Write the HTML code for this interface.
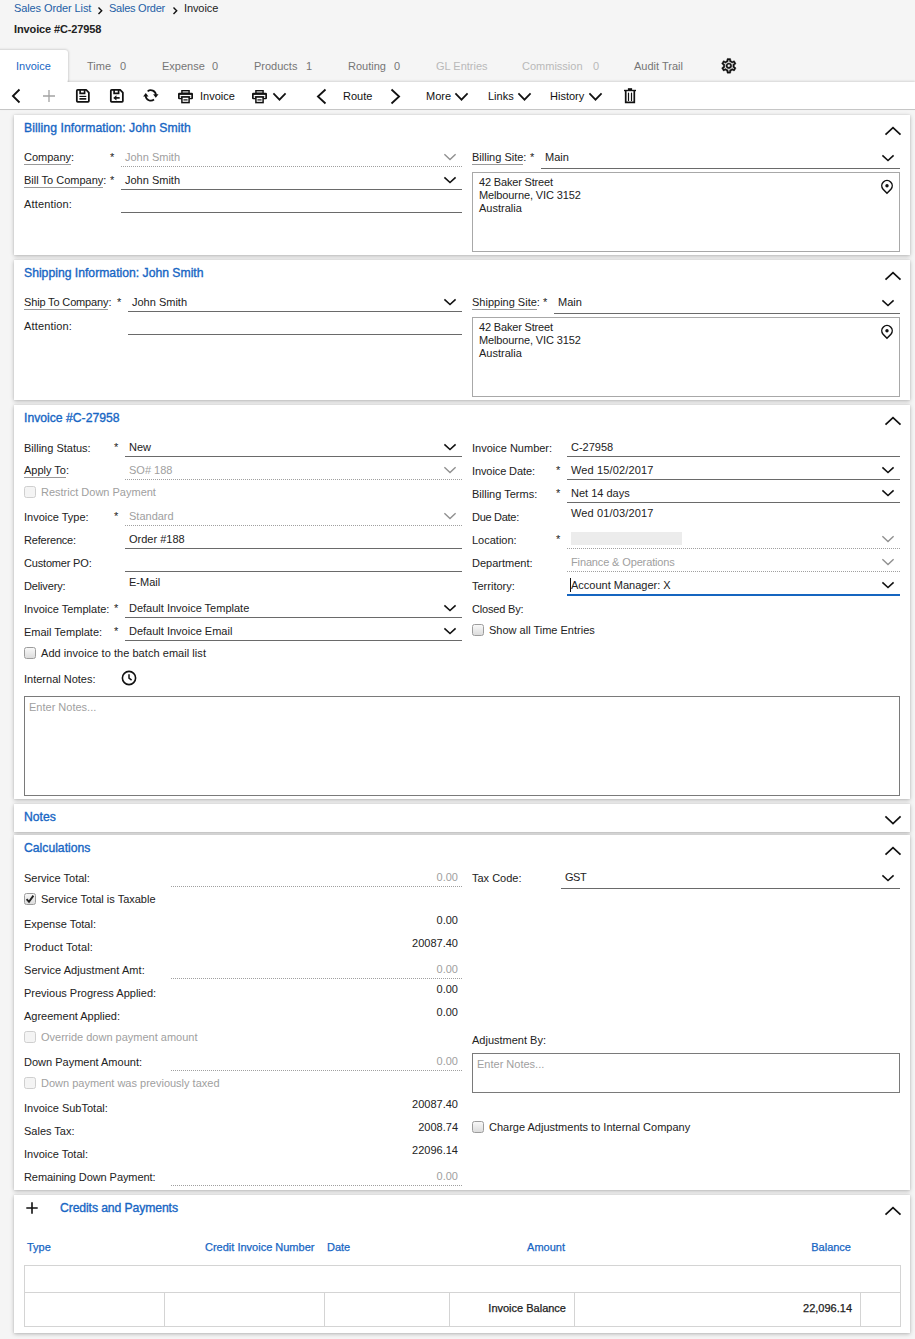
<!DOCTYPE html>
<html lang="en">
<head>
<meta charset="utf-8">
<title>Invoice #C-27958</title>
<style>
*{box-sizing:border-box;margin:0;padding:0}
html,body{width:915px;height:1339px;overflow:hidden;background:#f5f5f5;font-family:"Liberation Sans",Arial,sans-serif;font-size:11px;color:#222}
.abs,.t,.card,.fld,.box,.cb,svg.i{position:absolute}
.t{white-space:nowrap;line-height:14px;height:14px}
.blue{color:#245fa6}
.gray{color:#a0a0a0}
.tab{color:#757575;font-size:11px}
.b{font-weight:bold}
.ul{border-bottom:1px solid #999;padding-bottom:1px}
.r{text-align:right}
.card{left:14px;width:896px;background:#fff;box-shadow:0 1px 4px rgba(0,0,0,.27),0 0 1px rgba(0,0,0,.1)}
.h{font-size:12.2px;color:#1766c4;-webkit-text-stroke:.35px #1766c4}
.hd{-webkit-text-stroke:.25px #1766c4;color:#1766c4}
.fld{height:1px;border-bottom:1px solid #6a6a6a}
.fld.d{border-bottom:1px dotted #a0a0a0}
.fld.act{border-bottom:2px solid #1565c0;height:2px}
.box{border:1px solid #7a7a7a;background:#fff}
.box.addr{border-color:#a8a8a8}
.cb{width:12px;height:12px;border:1px solid #9c9c9c;border-radius:2.5px;background:linear-gradient(#f8f8f8,#dcdcdc)}
.cb.dis{border-color:#cfcfcf;background:#f4f4f4}
svg.i{overflow:visible}
.tb{font-size:11px;color:#111}
</style>
</head>
<body>

<!-- breadcrumb -->
<div class="t blue" style="top:1px;left:14px;letter-spacing:-.1px">Sales Order List</div>
<div class="t blue" style="top:1px;left:109px;letter-spacing:-.25px">Sales Order</div>
<div class="t " style="top:1px;left:184px;letter-spacing:-.1px">Invoice</div>
<svg class="i" style="left:98.2px;top:7.3px" width="4.6" height="7.4" viewBox="0 0 4.6 7.4"><polyline points="0.5,0.5 3.6999999999999997,3.7 0.5,6.9" fill="none" stroke="#111" stroke-width="1.4"/></svg>
<svg class="i" style="left:173.39999999999998px;top:7.3px" width="4.6" height="7.4" viewBox="0 0 4.6 7.4"><polyline points="0.5,0.5 3.6999999999999997,3.7 0.5,6.9" fill="none" stroke="#111" stroke-width="1.4"/></svg>
<div class="t b" style="top:22px;left:14px;letter-spacing:-.12px">Invoice #C-27958</div>
<!-- tabs -->
<div class="abs" style="left:-4px;top:50px;width:72px;height:33px;background:#fff;border-radius:0 3px 0 0;box-shadow:0 0 3px rgba(0,0,0,.28)"></div>
<div class="abs" style="left:0;top:82px;width:915px;height:28px;background:#fff;border-bottom:1px solid #c6c6c6;box-shadow:0 -1px 2px rgba(0,0,0,.13)"></div>
<div class="abs" style="left:0;top:76px;width:67px;height:10px;background:#fff"></div>
<div class="t blue" style="top:59px;left:16px;color:#1766c4">Invoice</div>
<div class="t tab" style="top:59px;left:87px;">Time</div>
<div class="t tab" style="top:59px;left:120px;">0</div>
<div class="t tab" style="top:59px;left:162px;">Expense</div>
<div class="t tab" style="top:59px;left:212px;">0</div>
<div class="t tab" style="top:59px;left:254px;">Products</div>
<div class="t tab" style="top:59px;left:306px;">1</div>
<div class="t tab" style="top:59px;left:348px;">Routing</div>
<div class="t tab" style="top:59px;left:394px;">0</div>
<div class="t tab" style="top:59px;left:436px;color:#b9b9b9">GL Entries</div>
<div class="t tab" style="top:59px;left:522px;color:#b9b9b9">Commission</div>
<div class="t tab" style="top:59px;left:593px;color:#b9b9b9">0</div>
<div class="t tab" style="top:59px;left:634px;">Audit Trail</div>
<svg class="i" style="left:720.15px;top:57.4px" width="17.7" height="17.7" viewBox="0 0 24 24"><path fill="#111" stroke="#111" stroke-width=".5" d="M19.43 12.98c.04-.32.07-.64.07-.98s-.03-.66-.07-.98l2.11-1.65c.19-.15.24-.42.12-.64l-2-3.46c-.12-.22-.39-.3-.61-.22l-2.49 1c-.52-.4-1.08-.73-1.69-.98l-.38-2.65C14.46 2.18 14.25 2 14 2h-4c-.25 0-.46.18-.49.42l-.38 2.65c-.61.25-1.17.59-1.69.98l-2.49-1c-.23-.09-.49 0-.61.22l-2 3.46c-.13.22-.07.49.12.64l2.11 1.65c-.04.32-.07.65-.07.98s.03.66.07.98l-2.11 1.65c-.19.15-.24.42-.12.64l2 3.46c.12.22.39.3.61.22l2.49-1c.52.4 1.08.73 1.69.98l.38 2.65c.03.24.24.42.49.42h4c.25 0 .46-.18.49-.42l.38-2.65c.61-.25 1.17-.59 1.69-.98l2.49 1c.23.09.49 0 .61-.22l2-3.46c.12-.22.07-.49-.12-.64l-2.11-1.65zm-1.98-1.71c.04.31.05.52.05.73s-.02.43-.05.73l-.14 1.13.89.7 1.08.84-.7 1.21-1.27-.51-1.04-.42-.9.68c-.43.32-.84.56-1.25.73l-1.06.43-.16 1.13-.2 1.35h-1.4l-.19-1.35-.16-1.13-1.06-.43c-.43-.18-.83-.41-1.23-.71l-.91-.7-1.06.43-1.27.51-.7-1.21 1.08-.84.89-.7-.14-1.13c-.03-.31-.05-.54-.05-.74s.02-.43.05-.73l.14-1.13-.89-.7-1.08-.84.7-1.21 1.27.51 1.04.42.9-.68c.43-.32.84-.56 1.25-.73l1.06-.43.16-1.13.2-1.35h1.39l.19 1.35.16 1.13 1.06.43c.43.18.83.41 1.23.71l.91.7 1.06-.43 1.27-.51.7 1.21-1.07.85-.89.7.14 1.13zM12 8c-2.21 0-4 1.79-4 4s1.790 4 4 4 4-1.790 4-4-1.790-4-4-4zm0 6c-1.100 0-2-.9-2-2s.9-2 2-2 2 .9 2 2-.9 2-2 2z"/></svg>
<!-- toolbar -->
<svg class="i" style="left:11.6px;top:89.0px" width="8" height="14" viewBox="0 0 8 14"><polyline points="7.5,0.5 0.9,7.0 7.5,13.5" fill="none" stroke="#111" stroke-width="1.8"/></svg>
<svg class="i" style="left:43px;top:90px" width="12" height="12" viewBox="0 0 12 12"><path d="M6 0V12M0 6H12" stroke="#a3a3a3" stroke-width="1.3" fill="none"/></svg>
<svg class="i" style="left:76.2px;top:88.9px" width="13.7" height="13.7" viewBox="0 0 14 14"><path d="M1.7 0.85H10.4L13.15 3.6V12.3Q13.15 13.15 12.3 13.15H1.7Q0.85 13.15 0.85 12.3V1.7Q0.85 0.85 1.7 0.85Z" fill="none" stroke="#111" stroke-width="1.8" stroke-linejoin="round"/><path d="M4.2 1V4.5H8.8V1" fill="none" stroke="#111" stroke-width="1.7"/><path d="M3.5 7.6H10.5" stroke="#111" stroke-width="1.2" fill="none"/><path d="M3.5 10.1H10.5" stroke="#111" stroke-width="1.7" fill="none"/></svg>
<svg class="i" style="left:110.2px;top:88.9px" width="13.7" height="13.7" viewBox="0 0 14 14"><path d="M1.7 0.85H10.4L13.15 3.6V12.3Q13.15 13.15 12.3 13.15H1.7Q0.85 13.15 0.85 12.3V1.7Q0.85 0.85 1.7 0.85Z" fill="none" stroke="#111" stroke-width="1.8" stroke-linejoin="round"/><path d="M4.2 1V4.5H8.8V1" fill="none" stroke="#111" stroke-width="1.7"/><path d="M5.5 9.1H9.9" stroke="#111" stroke-width="1.7" fill="none"/><path d="M3.3 9.1L6.6 6.5V11.7Z" fill="#111"/></svg>
<svg class="i" style="left:143.2px;top:89.4px" width="15.6" height="13" viewBox="0 0 15.6 13"><path d="M4.6 2.3A5.2 5.2 0 0 1 12.98 5.9" fill="none" stroke="#111" stroke-width="1.7"/><path d="M10.1 5.3H15.5L12.8 8.7Z" fill="#111"/><path d="M11 10.5A5.2 5.2 0 0 1 2.62 6.9" fill="none" stroke="#111" stroke-width="1.7"/><path d="M0.1 7.5H5.5L2.8 4.1Z" fill="#111"/></svg>
<svg class="i" style="left:177.5px;top:90px" width="15" height="13.4" viewBox="0 0 15 13.4"><rect x="3.9" y="0.7" width="7.2" height="2.6" fill="none" stroke="#111" stroke-width="1.4"/><rect x="0" y="2.7" width="15" height="6.6" rx="1.3" fill="#111"/><rect x="1.7" y="4.9" width="11.6" height="1.4" fill="#fff"/><rect x="1.7" y="6.3" width="1.5" height="1.6" fill="#fff"/><rect x="11.8" y="6.3" width="1.5" height="1.6" fill="#fff"/><rect x="3.9" y="7" width="7.2" height="5.6" fill="#fff" stroke="#111" stroke-width="1.5"/><path d="M5.4 9.9H9.6" stroke="#111" stroke-width="1.2"/></svg>
<svg class="i" style="left:251.9px;top:90px" width="15" height="13.4" viewBox="0 0 15 13.4"><rect x="3.9" y="0.7" width="7.2" height="2.6" fill="none" stroke="#111" stroke-width="1.4"/><rect x="0" y="2.7" width="15" height="6.6" rx="1.3" fill="#111"/><rect x="1.7" y="4.9" width="11.6" height="1.4" fill="#fff"/><rect x="1.7" y="6.3" width="1.5" height="1.6" fill="#fff"/><rect x="11.8" y="6.3" width="1.5" height="1.6" fill="#fff"/><rect x="3.9" y="7" width="7.2" height="5.6" fill="#fff" stroke="#111" stroke-width="1.5"/><path d="M5.4 9.9H9.6" stroke="#111" stroke-width="1.2"/></svg>
<svg class="i" style="left:624px;top:88.1px" width="12" height="15.2" viewBox="0 0 12 15.2"><rect x="3.9" y="0.2" width="4.2" height="1.9" fill="#111"/><rect x="0" y="1.8" width="12" height="1.4" fill="#111"/><path d="M1.7 3V14.3H10.3V3" fill="none" stroke="#111" stroke-width="1.7"/><path d="M4.5 5.2V12.4M7.5 5.2V12.4" stroke="#111" stroke-width="1.2" stroke-linecap="round" fill="none"/></svg>
<div class="t tb" style="top:89px;left:200px;">Invoice</div>
<svg class="i" style="left:272.8px;top:92.80000000000001px" width="13" height="7.2" viewBox="0 0 13 7.2"><polyline points="0.4,0.3 6.5,6.7 12.6,0.3" fill="none" stroke="#111" stroke-width="1.7" stroke-linejoin="miter"/></svg>
<svg class="i" style="left:316.5px;top:88.5px" width="9" height="15" viewBox="0 0 9 15"><polyline points="8.5,0.5 0.9,7.5 8.5,14.5" fill="none" stroke="#111" stroke-width="1.8"/></svg>
<div class="t tb" style="top:89px;left:343px;">Route</div>
<svg class="i" style="left:391.0px;top:88.5px" width="9" height="15" viewBox="0 0 9 15"><polyline points="0.5,0.5 8.1,7.5 0.5,14.5" fill="none" stroke="#111" stroke-width="1.8"/></svg>
<div class="t tb" style="top:89px;left:426px;">More</div>
<svg class="i" style="left:455.1px;top:92.80000000000001px" width="13" height="7.2" viewBox="0 0 13 7.2"><polyline points="0.4,0.3 6.5,6.7 12.6,0.3" fill="none" stroke="#111" stroke-width="1.7" stroke-linejoin="miter"/></svg>
<div class="t tb" style="top:89px;left:488px;">Links</div>
<svg class="i" style="left:518.0px;top:92.80000000000001px" width="13" height="7.2" viewBox="0 0 13 7.2"><polyline points="0.4,0.3 6.5,6.7 12.6,0.3" fill="none" stroke="#111" stroke-width="1.7" stroke-linejoin="miter"/></svg>
<div class="t tb" style="top:89px;left:550px;">History</div>
<svg class="i" style="left:588.6px;top:92.80000000000001px" width="13" height="7.2" viewBox="0 0 13 7.2"><polyline points="0.4,0.3 6.5,6.7 12.6,0.3" fill="none" stroke="#111" stroke-width="1.7" stroke-linejoin="miter"/></svg>
<div class="card" style="top:115px;height:140px"></div>
<div class="card" style="top:260px;height:140px"></div>
<div class="card" style="top:405px;height:394px"></div>
<div class="card" style="top:804px;height:28px"></div>
<div class="card" style="top:835px;height:355px"></div>
<div class="card" style="top:1195px;height:138px"></div>
<!-- billing -->
<div class="t h" style="top:121px;left:24px;letter-spacing:0.07px;">Billing Information: John Smith</div>
<svg class="i" style="left:885.0px;top:127.0px" width="16" height="8" viewBox="0 0 16 8"><polyline points="0.5,7.7 8.0,0.6 15.5,7.7" fill="none" stroke="#111" stroke-width="1.7" stroke-linejoin="miter"/></svg>
<div class="t " style="top:150px;left:24px;"><span class="ul">Company</span>:</div>
<div class="t " style="top:150px;left:110px;">*</div>
<div class="t gray" style="top:150px;left:125px;">John Smith</div>
<div class="fld d " style="left:121px;top:166px;width:341px"></div>
<svg class="i" style="left:444.0px;top:154.0px" width="12" height="6" viewBox="0 0 12 6"><polyline points="0.4,0.3 6.0,5.5 11.6,0.3" fill="none" stroke="#909090" stroke-width="1.4" stroke-linejoin="miter"/></svg>
<div class="t " style="top:173px;left:24px;"><span class="ul">Bill To Company</span>:</div>
<div class="t " style="top:173px;left:110px;">*</div>
<div class="t " style="top:173px;left:125px;">John Smith</div>
<div class="fld  " style="left:121px;top:189px;width:341px"></div>
<svg class="i" style="left:444.0px;top:177.0px" width="12" height="6" viewBox="0 0 12 6"><polyline points="0.4,0.3 6.0,5.5 11.6,0.3" fill="none" stroke="#111" stroke-width="1.6" stroke-linejoin="miter"/></svg>
<div class="t " style="top:197px;left:24px;letter-spacing:0.15px;">Attention:</div>
<div class="fld  " style="left:121px;top:212px;width:341px"></div>
<div class="t " style="top:150px;left:472px;"><span class="ul">Billing Site</span>:</div>
<div class="t " style="top:150px;left:530px;">*</div>
<div class="t " style="top:150px;left:545px;">Main</div>
<div class="fld  " style="left:541px;top:168px;width:359px"></div>
<svg class="i" style="left:882.0px;top:155.0px" width="12" height="6" viewBox="0 0 12 6"><polyline points="0.4,0.3 6.0,5.5 11.6,0.3" fill="none" stroke="#111" stroke-width="1.6" stroke-linejoin="miter"/></svg>
<div class="box addr" style="left:472px;top:172px;width:428px;height:80px"></div>
<div class="t " style="top:175px;left:479px;letter-spacing:-0.17px;">42 Baker Street</div>
<div class="t " style="top:188px;left:479px;letter-spacing:-0.12px;">Melbourne, VIC 3152</div>
<div class="t " style="top:201px;left:479px;">Australia</div>
<svg class="i" style="left:881px;top:180px" width="12" height="14" viewBox="0 0 12 14"><path d="M6 13.2 L2.1 9.2 A5.2 5.2 0 1 1 9.9 9.2 Z" fill="none" stroke="#111" stroke-width="1.5" stroke-linejoin="miter"/><circle cx="6" cy="5.8" r="1.7" fill="#111"/></svg>
<!-- shipping -->
<div class="t h" style="top:266px;left:24px;">Shipping Information: John Smith</div>
<svg class="i" style="left:885.0px;top:272.0px" width="16" height="8" viewBox="0 0 16 8"><polyline points="0.5,7.7 8.0,0.6 15.5,7.7" fill="none" stroke="#111" stroke-width="1.7" stroke-linejoin="miter"/></svg>
<div class="t " style="top:295px;left:24px;letter-spacing:-0.15px;"><span class="ul">Ship To Company</span>:</div>
<div class="t " style="top:295px;left:117px;">*</div>
<div class="t " style="top:295px;left:132px;">John Smith</div>
<div class="fld  " style="left:128px;top:311px;width:334px"></div>
<svg class="i" style="left:444.0px;top:299.0px" width="12" height="6" viewBox="0 0 12 6"><polyline points="0.4,0.3 6.0,5.5 11.6,0.3" fill="none" stroke="#111" stroke-width="1.6" stroke-linejoin="miter"/></svg>
<div class="t " style="top:319px;left:24px;letter-spacing:0.15px;">Attention:</div>
<div class="fld  " style="left:128px;top:334px;width:334px"></div>
<div class="t " style="top:295px;left:472px;"><span class="ul">Shipping Site</span>:</div>
<div class="t " style="top:295px;left:543px;">*</div>
<div class="t " style="top:295px;left:558px;">Main</div>
<div class="fld  " style="left:554px;top:313px;width:346px"></div>
<svg class="i" style="left:882.0px;top:300.0px" width="12" height="6" viewBox="0 0 12 6"><polyline points="0.4,0.3 6.0,5.5 11.6,0.3" fill="none" stroke="#111" stroke-width="1.6" stroke-linejoin="miter"/></svg>
<div class="box addr" style="left:472px;top:317px;width:428px;height:80px"></div>
<div class="t " style="top:320px;left:479px;letter-spacing:-0.17px;">42 Baker Street</div>
<div class="t " style="top:333px;left:479px;letter-spacing:-0.12px;">Melbourne, VIC 3152</div>
<div class="t " style="top:346px;left:479px;">Australia</div>
<svg class="i" style="left:881px;top:325px" width="12" height="14" viewBox="0 0 12 14"><path d="M6 13.2 L2.1 9.2 A5.2 5.2 0 1 1 9.9 9.2 Z" fill="none" stroke="#111" stroke-width="1.5" stroke-linejoin="miter"/><circle cx="6" cy="5.8" r="1.7" fill="#111"/></svg>
<!-- invoice -->
<div class="t h" style="top:411px;left:24px;">Invoice #C-27958</div>
<svg class="i" style="left:885.0px;top:417.0px" width="16" height="8" viewBox="0 0 16 8"><polyline points="0.5,7.7 8.0,0.6 15.5,7.7" fill="none" stroke="#111" stroke-width="1.7" stroke-linejoin="miter"/></svg>
<div class="t " style="top:441px;left:24px;">Billing Status:</div>
<div class="t " style="top:440px;left:114px;">*</div>
<div class="t " style="top:440px;left:129px;">New</div>
<div class="fld  " style="left:125px;top:456px;width:337px"></div>
<svg class="i" style="left:444.0px;top:444.0px" width="12" height="6" viewBox="0 0 12 6"><polyline points="0.4,0.3 6.0,5.5 11.6,0.3" fill="none" stroke="#111" stroke-width="1.6" stroke-linejoin="miter"/></svg>
<div class="t " style="top:463px;left:24px;"><span class="ul">Apply To</span>:</div>
<div class="t gray" style="top:463px;left:129px;">SO# 188</div>
<div class="fld d " style="left:125px;top:479px;width:337px"></div>
<svg class="i" style="left:444.0px;top:467.0px" width="12" height="6" viewBox="0 0 12 6"><polyline points="0.4,0.3 6.0,5.5 11.6,0.3" fill="none" stroke="#909090" stroke-width="1.4" stroke-linejoin="miter"/></svg>
<div class="cb dis" style="left:24px;top:486px"></div>
<div class="t gray" style="top:485px;left:41px;">Restrict Down Payment</div>
<div class="t " style="top:510px;left:24px;">Invoice Type:</div>
<div class="t " style="top:509px;left:114px;">*</div>
<div class="t gray" style="top:509px;left:129px;">Standard</div>
<div class="fld d " style="left:125px;top:525px;width:337px"></div>
<svg class="i" style="left:444.0px;top:513.0px" width="12" height="6" viewBox="0 0 12 6"><polyline points="0.4,0.3 6.0,5.5 11.6,0.3" fill="none" stroke="#909090" stroke-width="1.4" stroke-linejoin="miter"/></svg>
<div class="t " style="top:533px;left:24px;letter-spacing:-0.19px;">Reference:</div>
<div class="t " style="top:532px;left:129px;">Order #188</div>
<div class="fld  " style="left:125px;top:548px;width:337px"></div>
<div class="t " style="top:556px;left:24px;letter-spacing:-0.18px;">Customer PO:</div>
<div class="fld  " style="left:125px;top:571px;width:337px"></div>
<div class="t " style="top:579px;left:24px;letter-spacing:-0.15px;">Delivery:</div>
<div class="t " style="top:575px;left:129px;">E-Mail</div>
<div class="t " style="top:602px;left:24px;">Invoice Template:</div>
<div class="t " style="top:601px;left:114px;">*</div>
<div class="t " style="top:601px;left:129px;">Default Invoice Template</div>
<div class="fld  " style="left:125px;top:617px;width:337px"></div>
<svg class="i" style="left:444.0px;top:605.0px" width="12" height="6" viewBox="0 0 12 6"><polyline points="0.4,0.3 6.0,5.5 11.6,0.3" fill="none" stroke="#111" stroke-width="1.6" stroke-linejoin="miter"/></svg>
<div class="t " style="top:625px;left:24px;">Email Template:</div>
<div class="t " style="top:624px;left:114px;">*</div>
<div class="t " style="top:624px;left:129px;">Default Invoice Email</div>
<div class="fld  " style="left:125px;top:640px;width:337px"></div>
<svg class="i" style="left:444.0px;top:628.0px" width="12" height="6" viewBox="0 0 12 6"><polyline points="0.4,0.3 6.0,5.5 11.6,0.3" fill="none" stroke="#111" stroke-width="1.6" stroke-linejoin="miter"/></svg>
<div class="cb " style="left:24px;top:647px"></div>
<div class="t " style="top:646px;left:41px;letter-spacing:0.05px;">Add invoice to the batch email list</div>
<div class="t " style="top:672px;left:24px;">Internal Notes:</div>
<svg class="i" style="left:121px;top:670px" width="16" height="16" viewBox="0 0 16 16"><circle cx="8" cy="8" r="6.6" fill="none" stroke="#111" stroke-width="1.6"/><polyline points="8,4.2 8,8.2 10.6,10.2" fill="none" stroke="#111" stroke-width="1.5"/></svg>
<div class="box" style="left:24px;top:696px;width:876px;height:100px"></div>
<div class="t gray" style="top:700px;left:29px;">Enter Notes...</div>
<div class="t " style="top:441px;left:472px;">Invoice Number:</div>
<div class="t " style="top:440px;left:571px;">C-27958</div>
<div class="fld  " style="left:567px;top:456px;width:333px"></div>
<div class="t " style="top:464px;left:472px;letter-spacing:-0.1px;">Invoice Date:</div>
<div class="t " style="top:463px;left:556px;">*</div>
<div class="t " style="top:463px;left:571px;letter-spacing:0.15px;">Wed 15/02/2017</div>
<div class="fld  " style="left:567px;top:479px;width:333px"></div>
<svg class="i" style="left:882.0px;top:467.0px" width="12" height="6" viewBox="0 0 12 6"><polyline points="0.4,0.3 6.0,5.5 11.6,0.3" fill="none" stroke="#111" stroke-width="1.6" stroke-linejoin="miter"/></svg>
<div class="t " style="top:487px;left:472px;">Billing Terms:</div>
<div class="t " style="top:486px;left:556px;">*</div>
<div class="t " style="top:486px;left:571px;">Net 14 days</div>
<div class="fld  " style="left:567px;top:502px;width:333px"></div>
<svg class="i" style="left:882.0px;top:490.0px" width="12" height="6" viewBox="0 0 12 6"><polyline points="0.4,0.3 6.0,5.5 11.6,0.3" fill="none" stroke="#111" stroke-width="1.6" stroke-linejoin="miter"/></svg>
<div class="t " style="top:510px;left:472px;letter-spacing:-0.29px;">Due Date:</div>
<div class="t " style="top:506px;left:571px;letter-spacing:0.15px;">Wed 01/03/2017</div>
<div class="t " style="top:533px;left:472px;">Location:</div>
<div class="t " style="top:532px;left:556px;">*</div>
<div class="abs" style="left:571px;top:532px;width:111px;height:13px;background:#ececec"></div>
<div class="fld d " style="left:567px;top:548px;width:333px"></div>
<svg class="i" style="left:882.0px;top:536.0px" width="12" height="6" viewBox="0 0 12 6"><polyline points="0.4,0.3 6.0,5.5 11.6,0.3" fill="none" stroke="#909090" stroke-width="1.4" stroke-linejoin="miter"/></svg>
<div class="t " style="top:556px;left:472px;">Department:</div>
<div class="t gray" style="top:555px;left:571px;letter-spacing:-0.135px;">Finance &amp; Operations</div>
<div class="fld d " style="left:567px;top:571px;width:333px"></div>
<svg class="i" style="left:882.0px;top:559.0px" width="12" height="6" viewBox="0 0 12 6"><polyline points="0.4,0.3 6.0,5.5 11.6,0.3" fill="none" stroke="#909090" stroke-width="1.4" stroke-linejoin="miter"/></svg>
<div class="t " style="top:579px;left:472px;">Territory:</div>
<div class="t " style="top:578px;left:571px;">Account Manager: X</div>
<div class="fld act" style="left:567px;top:594px;width:333px"></div>
<svg class="i" style="left:882.0px;top:582.0px" width="12" height="6" viewBox="0 0 12 6"><polyline points="0.4,0.3 6.0,5.5 11.6,0.3" fill="none" stroke="#111" stroke-width="1.6" stroke-linejoin="miter"/></svg>
<div class="abs" style="left:570px;top:578px;width:1px;height:14px;background:#111"></div>
<div class="t " style="top:602px;left:472px;letter-spacing:-0.18px;">Closed By:</div>
<div class="cb " style="left:472px;top:624px"></div>
<div class="t " style="top:623px;left:489px;">Show all Time Entries</div>
<!-- notes -->
<div class="t h" style="top:810px;left:24px;">Notes</div>
<svg class="i" style="left:885.0px;top:815.8px" width="16" height="8" viewBox="0 0 16 8"><polyline points="0.4,0.3 8.0,7.5 15.6,0.3" fill="none" stroke="#111" stroke-width="1.7" stroke-linejoin="miter"/></svg>
<!-- calculations -->
<div class="t h" style="top:841px;left:24px;">Calculations</div>
<svg class="i" style="left:885.0px;top:847.0px" width="16" height="8" viewBox="0 0 16 8"><polyline points="0.5,7.7 8.0,0.6 15.5,7.7" fill="none" stroke="#111" stroke-width="1.7" stroke-linejoin="miter"/></svg>
<div class="t " style="top:871px;left:24px;">Service Total:</div>
<div class="t gray r" style="top:870px;right:457px;">0.00</div>
<div class="fld d " style="left:171px;top:886px;width:291px"></div>
<div class="cb " style="left:24px;top:893px"></div>
<svg class="i" style="left:25px;top:894px" width="10" height="10" viewBox="0 0 10 10"><polyline points="1.6,5.2 4,7.8 8.4,1.6" fill="none" stroke="#222" stroke-width="1.9"/></svg>
<div class="t " style="top:892px;left:41px;">Service Total is Taxable</div>
<div class="t " style="top:917px;left:24px;">Expense Total:</div>
<div class="t r" style="top:913px;right:457px;">0.00</div>
<div class="t " style="top:940px;left:24px;letter-spacing:0.14px;">Product Total:</div>
<div class="t r" style="top:936px;right:457px;">20087.40</div>
<div class="t " style="top:963px;left:24px;letter-spacing:0.07px;">Service Adjustment Amt:</div>
<div class="t gray r" style="top:962px;right:457px;">0.00</div>
<div class="fld d " style="left:171px;top:978px;width:291px"></div>
<div class="t " style="top:986px;left:24px;">Previous Progress Applied:</div>
<div class="t r" style="top:982px;right:457px;">0.00</div>
<div class="t " style="top:1009px;left:24px;">Agreement Applied:</div>
<div class="t r" style="top:1005px;right:457px;">0.00</div>
<div class="cb dis" style="left:24px;top:1031px"></div>
<div class="t gray" style="top:1030px;left:41px;">Override down payment amount</div>
<div class="t " style="top:1055px;left:24px;">Down Payment Amount:</div>
<div class="t gray r" style="top:1054px;right:457px;">0.00</div>
<div class="fld d " style="left:171px;top:1070px;width:291px"></div>
<div class="cb dis" style="left:24px;top:1077px"></div>
<div class="t gray" style="top:1076px;left:41px;">Down payment was previously taxed</div>
<div class="t " style="top:1101px;left:24px;">Invoice SubTotal:</div>
<div class="t r" style="top:1097px;right:457px;">20087.40</div>
<div class="t " style="top:1124px;left:24px;">Sales Tax:</div>
<div class="t r" style="top:1120px;right:457px;">2008.74</div>
<div class="t " style="top:1147px;left:24px;">Invoice Total:</div>
<div class="t r" style="top:1143px;right:457px;">22096.14</div>
<div class="t " style="top:1170px;left:24px;letter-spacing:-0.08px;">Remaining Down Payment:</div>
<div class="t gray r" style="top:1169px;right:457px;">0.00</div>
<div class="fld d " style="left:171px;top:1185px;width:291px"></div>
<div class="t " style="top:871px;left:472px;">Tax Code:</div>
<div class="t " style="top:870px;left:565px;letter-spacing:-0.5px;">GST</div>
<div class="fld  " style="left:561px;top:888px;width:339px"></div>
<svg class="i" style="left:882.0px;top:875.0px" width="12" height="6" viewBox="0 0 12 6"><polyline points="0.4,0.3 6.0,5.5 11.6,0.3" fill="none" stroke="#111" stroke-width="1.6" stroke-linejoin="miter"/></svg>
<div class="t " style="top:1033px;left:472px;">Adjustment By:</div>
<div class="box" style="left:472px;top:1053px;width:428px;height:40px"></div>
<div class="t gray" style="top:1057px;left:477px;">Enter Notes...</div>
<div class="cb " style="left:472px;top:1121px"></div>
<div class="t " style="top:1120px;left:489px;">Charge Adjustments to Internal Company</div>
<!-- credits -->
<svg class="i" style="left:26px;top:1202px" width="12" height="12" viewBox="0 0 12 12"><path d="M6 0.3V11.7M0.3 6H11.7" stroke="#111" stroke-width="1.6" fill="none"/></svg>
<div class="t h" style="top:1201px;left:60px;letter-spacing:-0.1px;">Credits and Payments</div>
<svg class="i" style="left:885.0px;top:1207.0px" width="16" height="8" viewBox="0 0 16 8"><polyline points="0.5,7.7 8.0,0.6 15.5,7.7" fill="none" stroke="#111" stroke-width="1.7" stroke-linejoin="miter"/></svg>
<div class="t blue hd" style="top:1240px;left:27px;">Type</div>
<div class="t blue hd" style="top:1240px;left:205px;">Credit Invoice Number</div>
<div class="t blue hd" style="top:1240px;left:327px;">Date</div>
<div class="t blue hd r" style="top:1240px;right:350px;">Amount</div>
<div class="t blue hd r" style="top:1240px;right:64px;">Balance</div>
<div class="abs" style="left:24px;top:1265px;width:877px;height:62px;border:1px solid #d4d4d4"></div>
<div class="abs" style="left:24px;top:1292px;width:877px;height:1px;background:#d4d4d4"></div>
<div class="abs" style="left:164px;top:1293px;width:1px;height:33px;background:#d4d4d4"></div>
<div class="abs" style="left:324px;top:1293px;width:1px;height:33px;background:#d4d4d4"></div>
<div class="abs" style="left:449px;top:1293px;width:1px;height:33px;background:#d4d4d4"></div>
<div class="abs" style="left:574px;top:1293px;width:1px;height:33px;background:#d4d4d4"></div>
<div class="abs" style="left:860px;top:1293px;width:1px;height:33px;background:#d4d4d4"></div>
<div class="t r" style="top:1301px;right:349px;-webkit-text-stroke:.25px #222">Invoice Balance</div>
<div class="t r" style="top:1301px;right:63px;-webkit-text-stroke:.25px #222">22,096.14</div>
</body>
</html>
